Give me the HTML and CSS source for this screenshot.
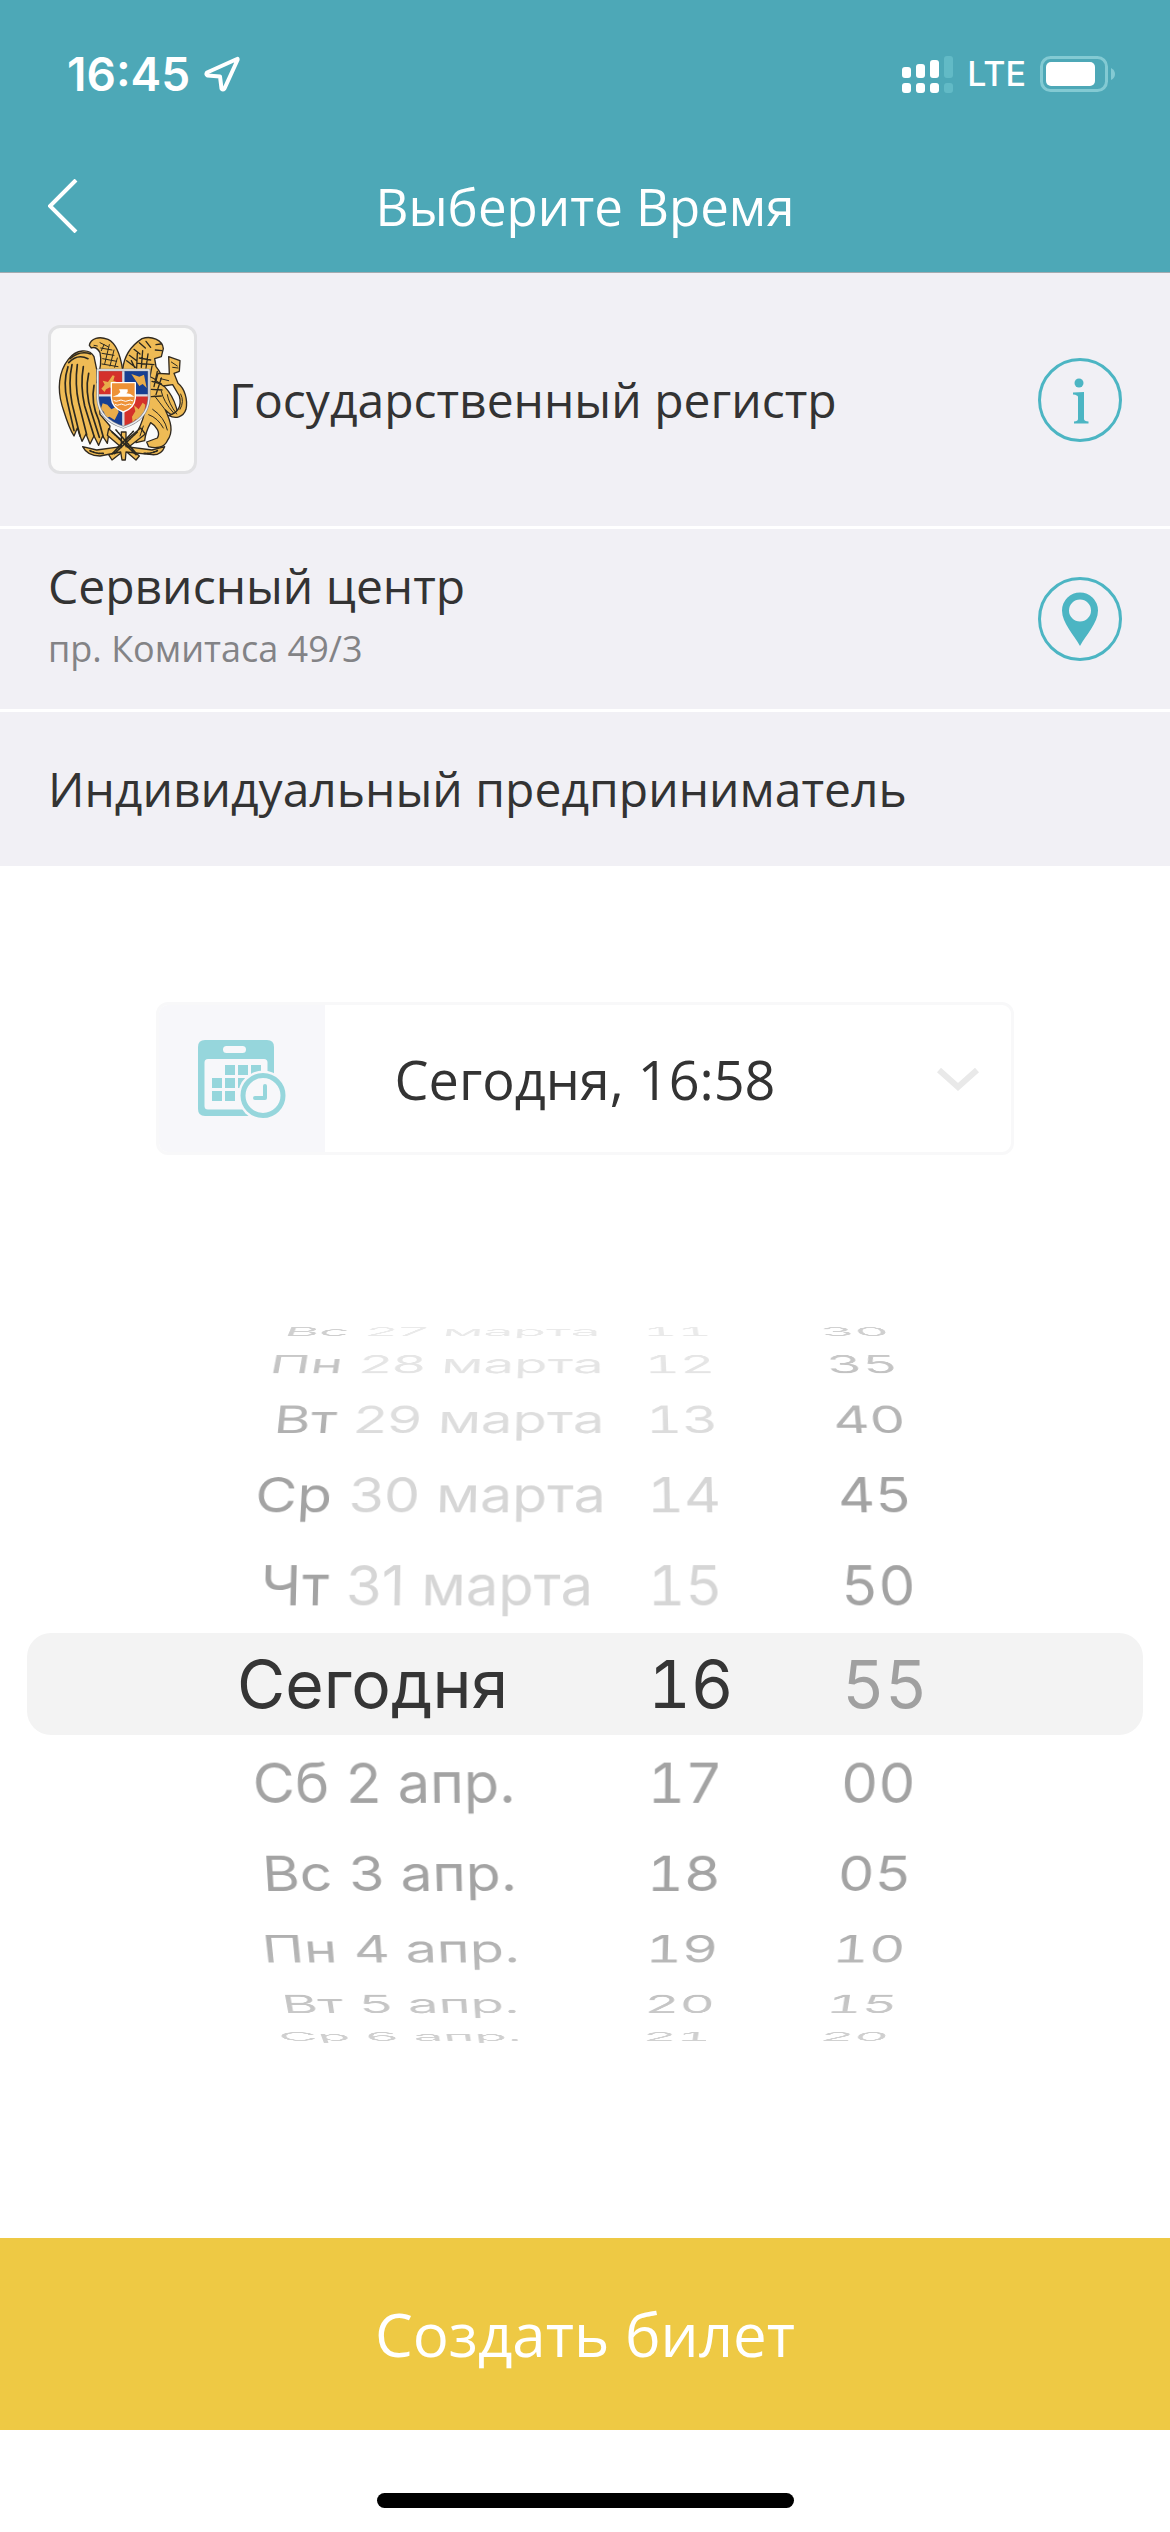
FILE: index.html
```html
<!DOCTYPE html>
<html lang="ru">
<head>
<meta charset="utf-8">
<meta name="viewport" content="width=device-width, initial-scale=1">
<title>Выберите Время</title>
<link rel="stylesheet" href="styles.css">
</head>
<body>
<header class="header">
  <div class="status">
    <div class="status-left">
      <span class="clock">16:45</span>
      <svg class="location" viewBox="0 0 36 36" aria-hidden="true"><path d="M33 3 3 16.500Q1.500 18.500 3.500 19.500L16 20.500 17.500 32.500Q18.500 34.500 20.500 32.500L33.500 4Q34 2.500 33 3Z" fill="none" stroke="#fff" stroke-width="4" stroke-linejoin="round"/></svg>
    </div>
    <div class="status-right">
      <svg class="signal" viewBox="0 0 51 37" aria-hidden="true" fill="#fff"><rect y="11" width="9" height="11" rx="3"/><rect x="14" y="8" width="9" height="14" rx="3"/><rect x="28" y="4" width="9" height="18" rx="3"/><rect y="27" width="9" height="10" rx="3"/><rect x="14" y="27" width="9" height="10" rx="3"/><rect x="28" y="27" width="9" height="10" rx="3"/><g fill="#62bac6"><rect x="42" width="9" height="22" rx="3"/><rect x="42" y="27" width="9" height="10" rx="3"/></g></svg>
      <span class="network">LTE</span>
      <svg class="battery" viewBox="0 0 75 36" aria-hidden="true"><rect x="1.500" y="1.500" width="65" height="33" rx="9" fill="none" stroke="#83cad3" stroke-width="3"/><rect x="6" y="6" width="49" height="24" rx="5" fill="#fff"/><path d="M71 12q4 2 4 6t-4 6z" fill="#83cad3"/></svg>
    </div>
  </div>
  <nav class="nav">
    <button class="back" type="button" aria-label="Назад"><svg viewBox="0 0 30 54" aria-hidden="true"><path d="M28 1 2 27 28 53" fill="none" stroke="#fff" stroke-width="4"/></svg></button>
    <h1 class="title">Выберите Время</h1>
  </nav>
</header>

<main class="main">
  <section class="row row-org">
    <div class="emblem">
      <svg viewBox="3 6 429 429" aria-hidden="true" stroke-linejoin="round" stroke-linecap="round">
        <g fill="#efbb55" stroke="#30291f" stroke-width="4">
          <path d="M132 92C118 66 78 70 55 100 25 138 22 190 36 238 48 276 56 306 72 330L82 306 96 346 108 324 120 354 132 330 146 358 158 330 172 352 180 300 150 265 140 130Z"/>
          <path d="M118 58C122 36 148 30 174 40 200 52 212 92 218 132L218 170 140 170C152 130 156 104 150 80 142 66 134 62 124 66Z"/>
          <path d="M218 132C222 88 248 56 276 38 304 28 338 42 340 68L334 92 314 98 318 122C340 148 346 180 338 220L290 250 218 170Z"/>
          <path d="M296 150C338 168 372 200 384 266 372 272 356 262 346 252 362 286 372 316 352 344 342 366 316 368 296 362L290 348 322 336C332 322 320 300 302 290 290 312 286 324 284 344L258 350 262 318C276 290 284 264 286 246Z"/>
          <path d="M356 92 390 104 388 136 372 142 384 172C404 188 414 220 408 250 400 274 376 280 356 268 384 262 396 240 388 210L368 176 340 180 318 164 324 142 358 144Z"/>
          <path d="M176 308 268 390 258 402 172 328ZM272 306 176 386 186 402 286 324Z"/>
          <path d="M98 362 140 372 214 362 214 318 228 318 228 362 306 372 344 362Q334 388 306 386L228 378 226 402H216L212 378 150 390Q112 390 98 362Z"/>
        </g>
        <g fill="none" stroke="#2b281f" stroke-width="5">
          <path d="M54 122Q38 170 52 226L72 314M66 116Q54 170 66 232L90 330M82 116Q74 176 86 230L110 326M100 122Q90 180 104 240L132 330M116 142Q104 196 124 258L148 334M132 178Q122 230 146 282L160 334M60 98Q90 72 122 84M56 110Q82 82 114 98"/>
          <path stroke-width="3" d="M150 50l24 12M152 66l34 6M156 82l36 6M158 98l42 8M156 114l48 8M162 56l-8 18M178 56l-14 58M192 72l-12 48M202 96l-8 28M132 58l10 2"/>
          <path stroke-width="4" d="M252 70l18 14M238 88l22 16M230 104l26 20M268 50l18 16M288 46l14 18M244 104l10 20M262 82l-2 44M278 74l-4 50M294 84l-6 42M268 96l34 6M264 112l48 4M306 120l-6 32M322 136l-10 46M334 156l-16 50M306 166l28 8M304 190l32 2M304 212l30-2M318 56l14-2M316 72l20 2"/>
          <path stroke-width="3" d="M314 210Q326 226 346 252M334 196Q340 226 370 260M352 206Q356 232 380 264M296 266Q324 276 340 306M308 250Q344 274 352 312M270 330l10-30M364 108l18 12M368 124l16 2M332 158l24 6M392 204q12 22-2 46"/>
          <path d="M186 318l72 68M198 312l64 74M262 318l-70 66M250 316l-64 68M120 374q20 10 40 8M322 374q-20 10-40 8" stroke-dasharray="5 4"/>
        </g>
        <path d="M143 132H297V218Q292 282 220 304 148 282 143 218Z" fill="#173f91"/>
        <path d="M143 132H218V208H143ZM222 210H297Q298 284 222 304Z" fill="#d4312b"/>
        <g fill="#e9ac4a"><path d="M154 188l10-12-6-12 16 4 14-20 6 2-4 14 10 4-14 8 4 18-10-10-12 6-4 8zM244 144l24 8 14-6 8 40-12-12-10 6-12-18zM158 232l14 4 12 14 16-8 6 16-12 24-16-10-12 4-4-18-10-8zM246 272l10-16-4-18 14 12 12-20 8 6-4 26-14 22-12-4-8 10z"/></g>
        <path d="M220 132V302M143 208H297" stroke="#d9dbe0" stroke-width="7"/>
        <path d="M143 132H297V218Q292 282 220 304 148 282 143 218Z" fill="none" stroke="#888b92" stroke-width="8"/>
        <path d="M143 132H297V218Q292 282 220 304 148 282 143 218Z" fill="none" stroke="#eceef0" stroke-width="4"/>
        <path d="M184 170H256V216Q254 246 220 258 186 246 184 216Z" fill="#ee9237" stroke="#fff" stroke-width="4"/>
        <path d="M187 212l16-6 8-8-4-8h26v8l-4 4 12 2 12 8z" fill="#fff"/>
        <path d="M192 224q7 4 14 0t14 0 14 0 14 0M196 236q6 4 12 0t12 0 12 0 12 0" fill="none" stroke="#fff" stroke-width="3"/>
      </svg>
    </div>
    <h2 class="row-title">Государственный регистр</h2>
    <button class="round" type="button" aria-label="Информация"><svg viewBox="0 0 84 84" aria-hidden="true"><circle cx="42" cy="42" r="40.500" fill="none" stroke="#4cb5c3" stroke-width="3"/><g fill="#4cb5c3"><circle cx="41" cy="25" r="4.500"/><path d="M35 34.500 46 34V61q0 2 4.500 2.500V65.500H36V63.500q4-.5 4-2.500V39q0-2-5-2.500z"/></g></svg></button>
  </section>
  <section class="row row-branch">
    <div class="branch">
      <h2 class="row-title">Сервисный центр</h2>
      <p class="address">пр. Комитаса 49/3</p>
    </div>
    <button class="round" type="button" aria-label="Показать на карте"><svg viewBox="0 0 84 84" aria-hidden="true"><circle cx="42" cy="42" r="40.500" fill="none" stroke="#4cb5c3" stroke-width="3"/><path fill-rule="evenodd" fill="#4cb5c3" d="M42 15.500A18 18 0 0 1 60 33.500C60 46 48 58 42 69 36 58 24 46 24 33.500A18 18 0 0 1 42 15.500ZM42 22.500A11 11 0 1 0 42 44.500 11 11 0 0 0 42 22.500Z"/></svg></button>
  </section>
  <section class="row row-service">
    <h2 class="row-title">Индивидуальный предприниматель</h2>
  </section>

  <button class="chooser" type="button" aria-expanded="true" aria-controls="picker">
    <span class="chooser-icon"><svg viewBox="0 0 88 78" aria-hidden="true">
      <path fill="#96d6dc" fill-rule="evenodd" d="M7 0H69Q76 0 76 7V69Q76 76 69 76H7Q0 76 0 69V7Q0 0 7 0ZM28.500 6A3.500 3.500 0 0 0 28.500 13H44.500A3.500 3.500 0 0 0 44.500 6ZM10 19Q6.500 19 6.500 22.500V66Q6.500 69.500 10 69.500H66Q69.500 69.500 69.500 66V22.500Q69.500 19 66 19Z"/>
      <path fill="#96d6dc" d="M27 25H37V35H27ZM40 25H50V35H40ZM53 25H63V35H53ZM14 38H24V48H14ZM27 38H37V48H27ZM40 38H50V48H40ZM14 51H24V61H14ZM27 51H37V61H27Z"/>
      <circle cx="65" cy="55.500" r="25" fill="#f7f7fa"/><circle cx="65" cy="55.500" r="20" fill="none" stroke="#96d6dc" stroke-width="5"/>
      <path d="M67 46V58H57" fill="none" stroke="#96d6dc" stroke-width="4" stroke-linecap="round" stroke-linejoin="round"/></svg></span>
    <span class="chooser-value">Сегодня, 16:58</span>
    <svg class="chevron" viewBox="0 0 42 24" aria-hidden="true"><path d="M2 3 21 20 40 3" fill="none" stroke="#e9e9e9" stroke-width="6"/></svg>
  </button>

  <section class="picker" id="picker" aria-label="Дата и время">
    <div class="band"></div>
    <div class="wheels">
      <div class="wheel" role="radiogroup" aria-label="Дата">
        <label class="item date past up-5"><input type="radio" name="date" disabled><span class="weekday">Вс</span><span>27 марта</span></label>
        <label class="item date past up-4"><input type="radio" name="date" disabled><span class="weekday">Пн</span><span>28 марта</span></label>
        <label class="item date past up-3"><input type="radio" name="date" disabled><span class="weekday">Вт</span><span>29 марта</span></label>
        <label class="item date past up-2"><input type="radio" name="date" disabled><span class="weekday">Ср</span><span>30 марта</span></label>
        <label class="item date past up-1"><input type="radio" name="date" disabled><span class="weekday">Чт</span><span>31 марта</span></label>
        <label class="item selected"><input type="radio" name="date" checked>Сегодня</label>
        <label class="item date down-1"><input type="radio" name="date"><span class="weekday">Сб</span><span>2 апр.</span></label>
        <label class="item date down-2"><input type="radio" name="date"><span class="weekday">Вс</span><span>3 апр.</span></label>
        <label class="item date down-3"><input type="radio" name="date"><span class="weekday">Пн</span><span>4 апр.</span></label>
        <label class="item date down-4"><input type="radio" name="date"><span class="weekday">Вт</span><span>5 апр.</span></label>
        <label class="item date down-5"><input type="radio" name="date"><span class="weekday">Ср</span><span>6 апр.</span></label>
      </div>
      <div class="wheel digits" role="radiogroup" aria-label="Часы">
        <label class="item past up-5"><input type="radio" name="hour" disabled>11</label>
        <label class="item past up-4"><input type="radio" name="hour" disabled>12</label>
        <label class="item past up-3"><input type="radio" name="hour" disabled>13</label>
        <label class="item past up-2"><input type="radio" name="hour" disabled>14</label>
        <label class="item past up-1"><input type="radio" name="hour" disabled>15</label>
        <label class="item selected"><input type="radio" name="hour" checked>16</label>
        <label class="item down-1"><input type="radio" name="hour">17</label>
        <label class="item down-2"><input type="radio" name="hour">18</label>
        <label class="item down-3"><input type="radio" name="hour">19</label>
        <label class="item down-4"><input type="radio" name="hour">20</label>
        <label class="item down-5"><input type="radio" name="hour">21</label>
      </div>
      <div class="wheel digits" role="radiogroup" aria-label="Минуты">
        <label class="item up-5"><input type="radio" name="minute">30</label>
        <label class="item up-4"><input type="radio" name="minute">35</label>
        <label class="item up-3"><input type="radio" name="minute">40</label>
        <label class="item up-2"><input type="radio" name="minute">45</label>
        <label class="item up-1"><input type="radio" name="minute">50</label>
        <label class="item selected unavailable"><input type="radio" name="minute" checked>55</label>
        <label class="item down-1"><input type="radio" name="minute">00</label>
        <label class="item down-2"><input type="radio" name="minute">05</label>
        <label class="item down-3"><input type="radio" name="minute">10</label>
        <label class="item down-4"><input type="radio" name="minute">15</label>
        <label class="item down-5"><input type="radio" name="minute">20</label>
      </div>
    </div>
  </section>
</main>

<button class="submit" type="button">Создать билет</button>
<footer class="home"><div class="home-bar"></div></footer>
</body>
</html>
```
FILE: styles.css
```css
* { box-sizing: border-box; }

body {
  margin: 0;
  min-height: 100vh;
  display: flex;
  flex-direction: column;
  background: #fff;
  color: #333;
  font-family: "Open Sans", "Noto Sans", sans-serif;
}

button {
  margin: 0;
  padding: 0;
  border: 0;
  background: none;
  color: inherit;
  font: inherit;
  cursor: pointer;
}

svg { display: block; }
h1, h2, p { margin: 0; font-weight: 400; }

/* Header */
.header {
  background: #4da8b7;
  border-bottom: 1px solid #a3abb0;
  color: #fff;
}

.status {
  height: 140px;
  padding: 8px 55px 0 67px;
  display: flex;
  align-items: center;
  justify-content: space-between;
  font-family: Inter, sans-serif;
}

.status-left, .status-right { display: flex; align-items: center; }
.status-left { gap: 14px; }
.status-right { gap: 14px; }
.clock { font-size: 46px; font-weight: 600; line-height: 60px; }
.network { font-size: 34px; font-weight: 500; line-height: 48px; }
.location { width: 36px; height: 36px; }
.signal { width: 51px; height: 37px; }
.battery { width: 75px; height: 36px; }

.nav {
  height: 132px;
  padding: 0 48px;
  display: grid;
  grid-template-columns: 80px 1fr 80px;
  align-items: center;
}

.back svg { width: 30px; height: 54px; }
.title { font-size: 51px; line-height: 68px; text-align: center; }

/* Details of the visit */
.main { flex: 1; }

.row {
  padding: 0 48px;
  display: flex;
  align-items: center;
  justify-content: space-between;
  gap: 32px;
  background: #f1f0f5;
}

.row + .row { border-top: 3px solid #fff; }
.row-org { height: 253px; }
.row-service { height: 157px; }
.row-title { font-size: 48px; line-height: 64px; }
.row-org .row-title { flex: 1; }
.branch { padding: 25px 0 35px; }

.emblem {
  width: 149px;
  height: 149px;
  border: 3px solid #e1e1e3;
  border-radius: 12px;
  background: #fafafa;
}

.emblem svg { width: 100%; height: 100%; }

.address {
  margin-top: 6px;
  color: #838386;
  font-size: 36px;
  line-height: 50px;
}

.round { flex: none; }
.round svg { width: 84px; height: 84px; }

/* Date and time field */
.chooser {
  width: calc(100% - 312px);
  height: 153px;
  margin: 136px 156px 0;
  display: grid;
  grid-template-columns: 166px 1fr 166px;
  align-items: center;
  border: 3px solid #f8f8f9;
  border-radius: 12px;
  background: #fff;
  overflow: hidden;
}

.chooser-icon {
  height: 100%;
  display: grid;
  place-items: center;
  background: #f7f7fa;
}

.chooser-icon svg { width: 88px; height: 78px; }
.chooser-value { font-size: 54px; line-height: 72px; }
.chevron { width: 42px; height: 24px; margin-right: 32px; justify-self: end; }

/* Wheel picker: every row sits on the surface of a cylinder */
.picker {
  --radius: 410px;
  --step: 14deg;
  position: relative;
  height: 724px;
  margin: 167px 27px 192px;
  overflow: hidden;
  font-family: Inter, sans-serif;
}

.band {
  position: absolute;
  inset: 311px 0;
  border-radius: 24px;
  background: #f3f3f3;
}

.wheels {
  height: 100%;
  display: grid;
  grid-template-columns: 411px 194px 91px;
  justify-content: center;
  perspective: 2900px;
  mask-image: linear-gradient(transparent -140px, #000 150px, #000 574px, transparent 864px);
}

.wheel {
  display: grid;
  align-items: center;
  transform-style: preserve-3d;
  transform: translateZ(calc(var(--radius) * -1));
}

.item {
  --turn: 0;
  grid-area: 1 / 1;
  color: #a3a3a3;
  font-size: 58px;
  line-height: 96px;
  white-space: nowrap;
  transform: rotateX(calc(var(--turn) * var(--step))) translateZ(var(--radius));
}

.item input { position: absolute; margin: 0; opacity: 0; }
.date { display: grid; grid-template-columns: 91px 1fr; column-gap: 17px; }
.weekday { text-align: right; }
.past { color: #d6d6d6; }
.past .weekday { color: #a3a3a3; }
.selected { color: #353535; font-size: 66px; }
.unavailable { color: #a0a0a0; }
.digits { font-variant-numeric: tabular-nums; }

.up-5 { --turn: 5; }
.up-4 { --turn: 4; }
.up-3 { --turn: 3; }
.up-2 { --turn: 2; }
.up-1 { --turn: 1; }
.down-1 { --turn: -1; }
.down-2 { --turn: -2; }
.down-3 { --turn: -3; }
.down-4 { --turn: -4; }
.down-5 { --turn: -5; }

/* Bottom */
.submit {
  height: 192px;
  background: #eec944;
  color: #fff;
  font-size: 60px;
  line-height: 80px;
}

.home {
  height: 102px;
  padding-bottom: 24px;
  display: flex;
  align-items: flex-end;
  justify-content: center;
}

.home-bar { width: 417px; height: 15px; border-radius: 8px; background: #000; }
```
